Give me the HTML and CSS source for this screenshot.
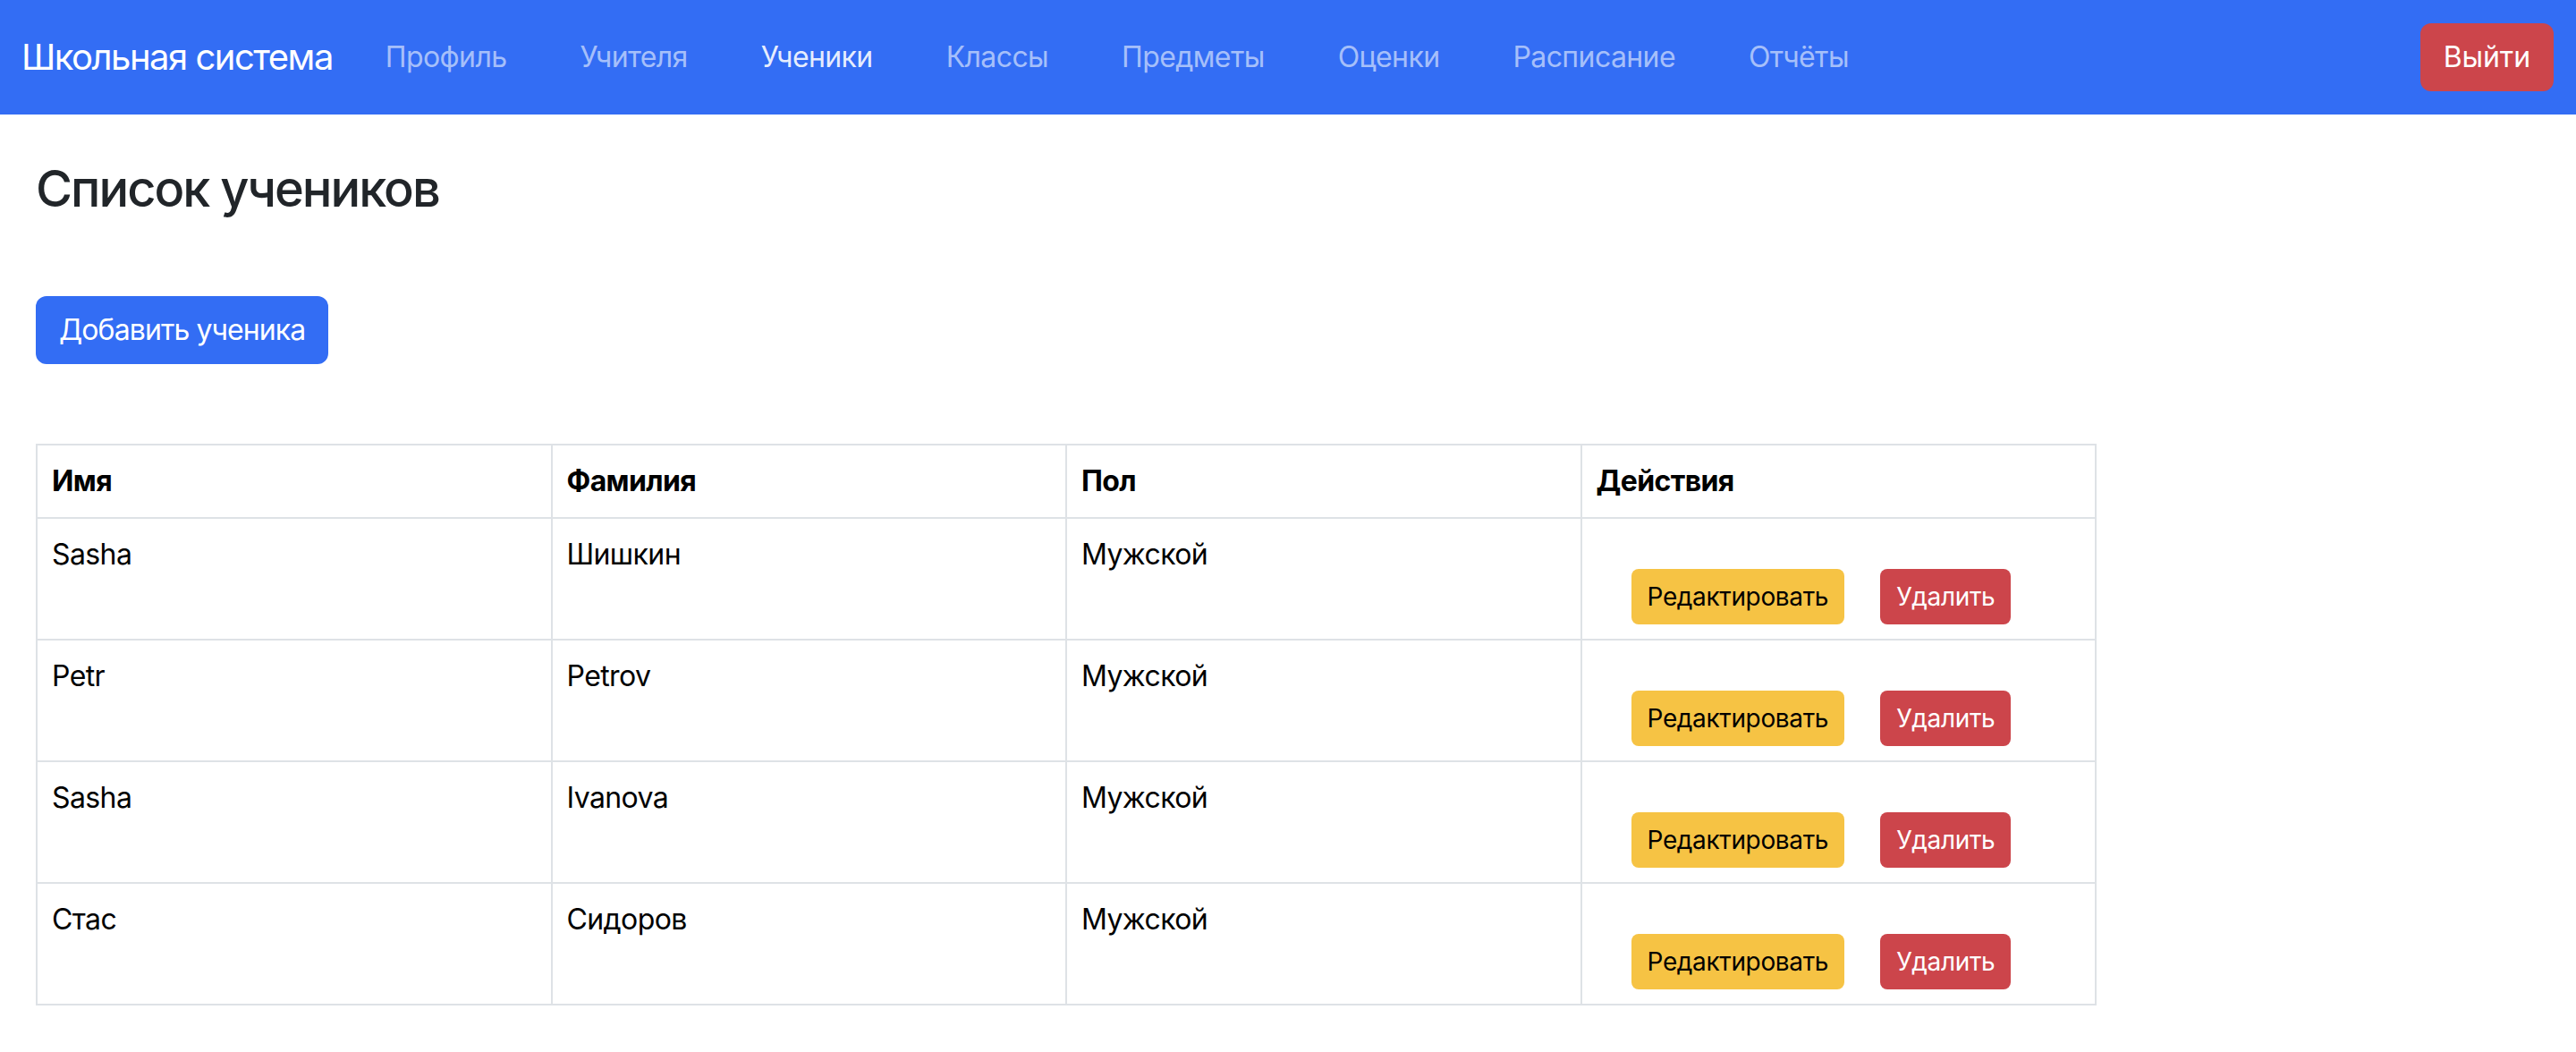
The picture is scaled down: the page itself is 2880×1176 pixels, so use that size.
FILE: index.html
```html
<!DOCTYPE html>
<html lang="ru">
<head>
<meta charset="utf-8">
<title>Список учеников</title>
<link rel="stylesheet" href="styles.css">
</head>
<body>
<nav class="navbar">
  <a class="brand" href="#">Школьная система</a>
  <ul class="nav-links">
    <li><a class="nav-link" href="#">Профиль</a></li>
    <li><a class="nav-link" href="#">Учителя</a></li>
    <li><a class="nav-link active" href="#">Ученики</a></li>
    <li><a class="nav-link" href="#">Классы</a></li>
    <li><a class="nav-link" href="#">Предметы</a></li>
    <li><a class="nav-link" href="#">Оценки</a></li>
    <li><a class="nav-link" href="#">Расписание</a></li>
    <li><a class="nav-link" href="#">Отчёты</a></li>
  </ul>
  <button class="btn btn-danger logout">Выйти</button>
</nav>
<main class="content">
  <h1 class="page-title">Список учеников</h1>
  <div class="toolbar">
    <button class="btn btn-primary">Добавить ученика</button>
  </div>
  <table class="students">
    <thead>
      <tr><th>Имя</th><th>Фамилия</th><th>Пол</th><th>Действия</th></tr>
    </thead>
    <tbody>
      <tr>
        <td>Sasha</td><td>Шишкин</td><td>Мужской</td>
        <td><div class="actions"><button class="btn-sm btn-warning">Редактировать</button><button class="btn-sm btn-danger">Удалить</button></div></td>
      </tr>
      <tr>
        <td>Petr</td><td>Petrov</td><td>Мужской</td>
        <td><div class="actions"><button class="btn-sm btn-warning">Редактировать</button><button class="btn-sm btn-danger">Удалить</button></div></td>
      </tr>
      <tr>
        <td>Sasha</td><td>Ivanova</td><td>Мужской</td>
        <td><div class="actions"><button class="btn-sm btn-warning">Редактировать</button><button class="btn-sm btn-danger">Удалить</button></div></td>
      </tr>
      <tr>
        <td>Стас</td><td>Сидоров</td><td>Мужской</td>
        <td><div class="actions"><button class="btn-sm btn-warning">Редактировать</button><button class="btn-sm btn-danger">Удалить</button></div></td>
      </tr>
    </tbody>
  </table>
</main>
</body>
</html>
```

FILE: styles.css
```css
* { box-sizing: border-box; }
html, body {
  margin: 0;
  padding: 0;
  background: #ffffff;
  font-family: Inter, "Liberation Sans", Arial, sans-serif;
  color: #212529;
}
.navbar {
  display: flex;
  align-items: center;
  height: 128px;
  padding: 0 25px 0 24px;
  background: #336df4;
}
.brand {
  font-size: 40px;
  line-height: 60px;
  letter-spacing: -1.5px;
  color: #ffffff;
  text-decoration: none;
  margin-right: 59px;
}
.nav-links {
  display: flex;
  gap: 82px;
  list-style: none;
  margin: 0;
  padding: 0;
}
.nav-link {
  font-size: 32px;
  line-height: 48px;
  letter-spacing: -0.6px;
  color: rgba(255, 255, 255, 0.58);
  text-decoration: none;
}
.nav-link.active { color: rgba(255, 255, 255, 0.9); }
.btn {
  font-family: inherit;
  font-size: 32px;
  line-height: 48px;
  letter-spacing: -0.9px;
  padding: 12px 24px;
  border: 2px solid transparent;
  border-radius: 12px;
  cursor: pointer;
}
.btn-primary { background: #336df4; color: #ffffff; }
.btn-danger { background: #cc454b; color: #ffffff; }
.btn-warning { background: #f6c344; color: #000000; }
.logout {
  margin-left: auto;
  letter-spacing: -0.1px;
}
.content { padding: 0 40px; }
.page-title {
  margin: 50px 0 0;
  font-size: 56px;
  line-height: 67px;
  font-weight: 500;
  letter-spacing: -2px;
  color: #212529;
}
.toolbar { margin-top: 86px; }
.students {
  margin-top: 89px;
  width: 2304px;
  border-collapse: collapse;
  table-layout: fixed;
  color: #000000;
}
.students th, .students td {
  border: 2px solid #dee2e6;
  padding: 16px;
  font-size: 32px;
  line-height: 48px;
  letter-spacing: -0.6px;
  text-align: left;
  vertical-align: top;
}
.students th { font-weight: 700; }
.actions {
  display: flex;
  gap: 40px;
  padding: 40px 0 0 39px;
}
.btn-sm {
  font-family: inherit;
  font-size: 28px;
  line-height: 42px;
  letter-spacing: -0.35px;
  padding: 8px 16px;
  border: 2px solid transparent;
  border-radius: 8px;
  cursor: pointer;
}
```
